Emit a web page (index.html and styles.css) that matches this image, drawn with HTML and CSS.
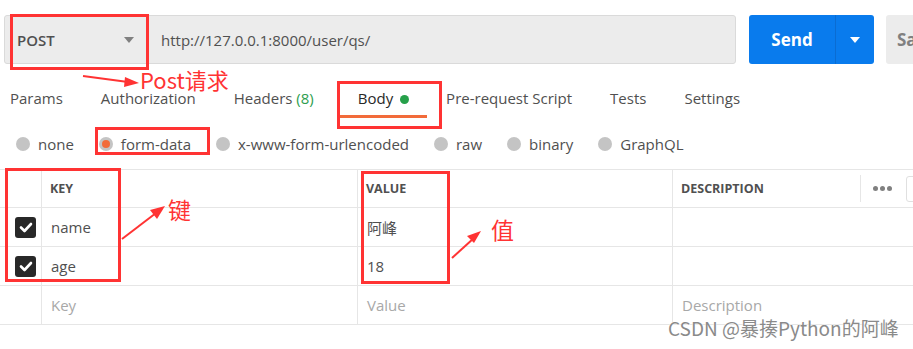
FILE: index.html
```html
<!DOCTYPE html>
<html>
<head>
<meta charset="utf-8">
<link rel="stylesheet" href="styles.css">
</head>
<body>
<div class="page">
  <div class="topbar">
    <div class="urlbox">
      <div class="method"><span class="method-name">POST</span><span class="caret"></span></div>
      <div class="url">http://127.0.0.1:8000/user/qs/</div>
    </div>
    <div class="send">
      <span class="send-label">Send</span>
      <span class="send-drop"><span class="caret white"></span></span>
    </div>
    <div class="save">Save</div>
  </div>

  <div class="tabs">
    <div class="tab">Params</div>
    <div class="tab">Authorization</div>
    <div class="tab headers">Headers <span class="count">(8)</span></div>
    <div class="tab active">Body <span class="dot"></span></div>
    <div class="tab">Pre-request Script</div>
    <div class="tab">Tests</div>
    <div class="tab">Settings</div>
    <div class="tab cookies">Cookies</div>
  </div>

  <div class="radios">
    <div class="radio"><span class="circle"></span>none</div>
    <div class="radio"><span class="circle on"></span>form-data</div>
    <div class="radio"><span class="circle"></span>x-www-form-urlencoded</div>
    <div class="radio"><span class="circle"></span>raw</div>
    <div class="radio"><span class="circle"></span>binary</div>
    <div class="radio"><span class="circle"></span>GraphQL</div>
  </div>

  <div class="table">
    <div class="row head">
      <div class="cell chk"></div>
      <div class="cell">KEY</div>
      <div class="cell">VALUE</div>
      <div class="cell desc-head">
        <span class="desc-title">DESCRIPTION</span>
        <span class="vsep"></span>
        <span class="dots"><i></i><i></i><i></i></span>
        <span class="bulk"></span>
      </div>
    </div>
    <div class="row">
      <div class="cell chk"><span class="checkbox"><svg viewBox="0 0 20 20" width="20" height="20"><path d="M5 10.5 L8.5 14 L15 7" fill="none" stroke="#fff" stroke-width="2.6" stroke-linecap="round" stroke-linejoin="round"/></svg></span></div>
      <div class="cell txt">name</div>
      <div class="cell txt">阿峰</div>
      <div class="cell"></div>
    </div>
    <div class="row">
      <div class="cell chk"><span class="checkbox"><svg viewBox="0 0 20 20" width="20" height="20"><path d="M5 10.5 L8.5 14 L15 7" fill="none" stroke="#fff" stroke-width="2.6" stroke-linecap="round" stroke-linejoin="round"/></svg></span></div>
      <div class="cell txt">age</div>
      <div class="cell txt">18</div>
      <div class="cell"></div>
    </div>
    <div class="row">
      <div class="cell chk"></div>
      <div class="cell ph">Key</div>
      <div class="cell ph">Value</div>
      <div class="cell ph">Description</div>
    </div>
  </div>

  <div class="anno box-post"></div>
  <div class="anno box-body"></div>
  <div class="anno box-form"></div>
  <div class="anno box-key"></div>
  <div class="anno box-value"></div>
  <div class="label lbl-post">Post请求</div>
  <div class="label lbl-key">键</div>
  <div class="label lbl-value">值</div>
  <svg class="arrows" width="913" height="349" viewBox="0 0 913 349">
    <g stroke="#f33" stroke-width="2" fill="#f33">
      <line x1="83" y1="76" x2="128" y2="82"/>
      <polygon points="139,83 125,77 124,87" stroke="none"/>
      <line x1="122" y1="239" x2="156" y2="213"/>
      <polygon points="165,206 150,210 157,219" stroke="none"/>
      <line x1="452" y1="258" x2="474" y2="238"/>
      <polygon points="481,231 467,236 474,243" stroke="none"/>
    </g>
  </svg>
  <div class="watermark">CSDN @暴揍Python的阿峰</div>
</div>
</body>
</html>
```

FILE: styles.css
```css
* { box-sizing: border-box; }
html, body { margin: 0; padding: 0; background: #fff; }
.page {
  position: relative;
  width: 913px;
  height: 349px;
  overflow: hidden;
  font-family: "Open Sans", "Noto Sans CJK SC", sans-serif;
  color: #505050;
}

/* top bar */
.topbar {
  display: flex;
  padding: 15px 0 0 4px;
  height: 64px;
}
.urlbox {
  width: 732px;
  height: 49px;
  background: #ececec;
  border: 1px solid #dadada;
  border-radius: 3px;
  display: flex;
  align-items: center;
  flex: none;
}
.method {
  width: 156px;
  display: flex;
  align-items: center;
  padding-left: 12px;
  flex: none;
}
.method-name {
  font-size: 15px;
  font-weight: 600;
  color: #505050;
  width: 107px;
}
.caret {
  width: 0; height: 0;
  border-left: 5px solid transparent;
  border-right: 5px solid transparent;
  border-top: 6px solid #808080;
}
.caret.white { border-top-color: #fff; }
.url {
  font-size: 15px;
  color: #505050;
}
.send {
  margin-left: 13px;
  width: 125px;
  height: 49px;
  background: #097bed;
  border-radius: 3px;
  display: flex;
  flex: none;
}
.send-label {
  width: 87px;
  display: flex;
  align-items: center;
  justify-content: center;
  color: #fff;
  font-weight: 700;
  font-size: 17px;
  border-right: 1px solid #0a6cd2;
}
.send-drop {
  flex: 1;
  display: flex;
  align-items: center;
  justify-content: center;
}
.save {
  margin-left: 12px;
  width: 80px;
  height: 49px;
  background: #ececec;
  border-radius: 3px;
  flex: none;
  padding-left: 11px;
  display: flex;
  align-items: center;
  font-size: 17px;
  font-weight: 700;
  color: #808080;
}

/* tabs */
.tabs {
  display: flex;
  height: 54px;
  padding-left: 10px;
  white-space: nowrap;
}
.tab {
  position: relative;
  padding: 24px 0 0 0;
  line-height: 20px;
  font-size: 15px;
  color: #505050;
  margin-right: 38px;
}
.tab.headers { margin-right: 44px; }
.tab .count { color: #2e9e4f; }
.tab.active { color: #282828; margin-right: 37px; }
.tab.active::after {
  content: "";
  position: absolute;
  left: -19px;
  right: -18px;
  bottom: 0;
  height: 3px;
  background: #f26b3a;
}
.dot {
  display: inline-block;
  width: 9px;
  height: 9px;
  border-radius: 50%;
  background: #26a04a;
  margin-left: 3px;
  vertical-align: 0;
}
.tab.cookies { margin-left: auto; margin-right: -60px; color: #f26b3a; }

/* radios */
.radios {
  display: flex;
  align-items: center;
  height: 51px;
  padding-left: 16px;
  font-size: 15px;
  color: #505050;
}
.radio {
  display: flex;
  align-items: center;
  margin-right: 25px;
}
.circle {
  width: 14px;
  height: 14px;
  border-radius: 50%;
  background: #c4c4c4;
  margin-right: 8px;
  display: flex;
  align-items: center;
  justify-content: center;
}
.circle.on::after {
  content: "";
  width: 8px;
  height: 8px;
  border-radius: 50%;
  background: #f26b3a;
}

/* table */
.table {
  border-top: 1px solid #e6e6e6;
}
.row {
  display: grid;
  grid-template-columns: 41px 316px 315px 1fr;
  height: 38px;
  border-bottom: 1px solid #e6e6e6;
}
.row + .row { height: 39px; }
.cell {
  display: flex;
  align-items: center;
  padding-left: 8px;
  border-left: 1px solid #e6e6e6;
  font-size: 15px;
  color: #505050;
}
.cell.chk { border-left: none; padding-left: 15px; }
.head .cell {
  font-size: 12.5px;
  font-weight: 700;
  color: #505050;
}
.cell.txt { padding-left: 9px; }
.cell.ph { color: #a8a8a8; padding-left: 9px; }
.desc-title { width: 179px; }
.vsep {
  width: 1px;
  height: 27px;
  background: #e6e6e6;
}
.dots {
  display: flex;
  gap: 2px;
  margin-left: 12px;
  width: 33px;
}
.dots i {
  width: 5px;
  height: 5px;
  border-radius: 50%;
  background: #808080;
}
.bulk {
  width: 40px;
  height: 26px;
  border: 1px solid #e0e0e0;
  border-radius: 3px;
}
.checkbox {
  width: 21px;
  height: 21px;
  border-radius: 3px;
  background: #282828;
  display: flex;
  align-items: center;
  justify-content: center;
}

/* annotations */
.anno {
  position: absolute;
  border: 3px solid #f33;
}
.box-post { left: 10px; top: 14px; width: 139px; height: 56px; }
.box-body { left: 337px; top: 81px; width: 105px; height: 48px; }
.box-form { left: 95px; top: 127px; width: 115px; height: 28px; }
.box-key { left: 5px; top: 168px; width: 116px; height: 114px; }
.box-value { left: 361px; top: 171px; width: 89px; height: 113px; }
.label {
  position: absolute;
  color: #f33;
  font-family: "Noto Sans CJK SC", sans-serif;
  line-height: 1;
}
.lbl-post { left: 140px; top: 68px; font-size: 22px; }
.lbl-key { left: 168px; top: 198px; font-size: 23px; }
.lbl-value { left: 491px; top: 218px; font-size: 23px; }
.arrows { position: absolute; left: 0; top: 0; }
.watermark {
  position: absolute;
  left: 668px;
  top: 315px;
  font-family: "Noto Sans CJK SC", sans-serif;
  font-size: 19px;
  line-height: 26px;
  color: #8a8a8a;
  text-shadow: 0 0 1px #fff, 0 0 2px #fff;
  white-space: nowrap;
}
```
